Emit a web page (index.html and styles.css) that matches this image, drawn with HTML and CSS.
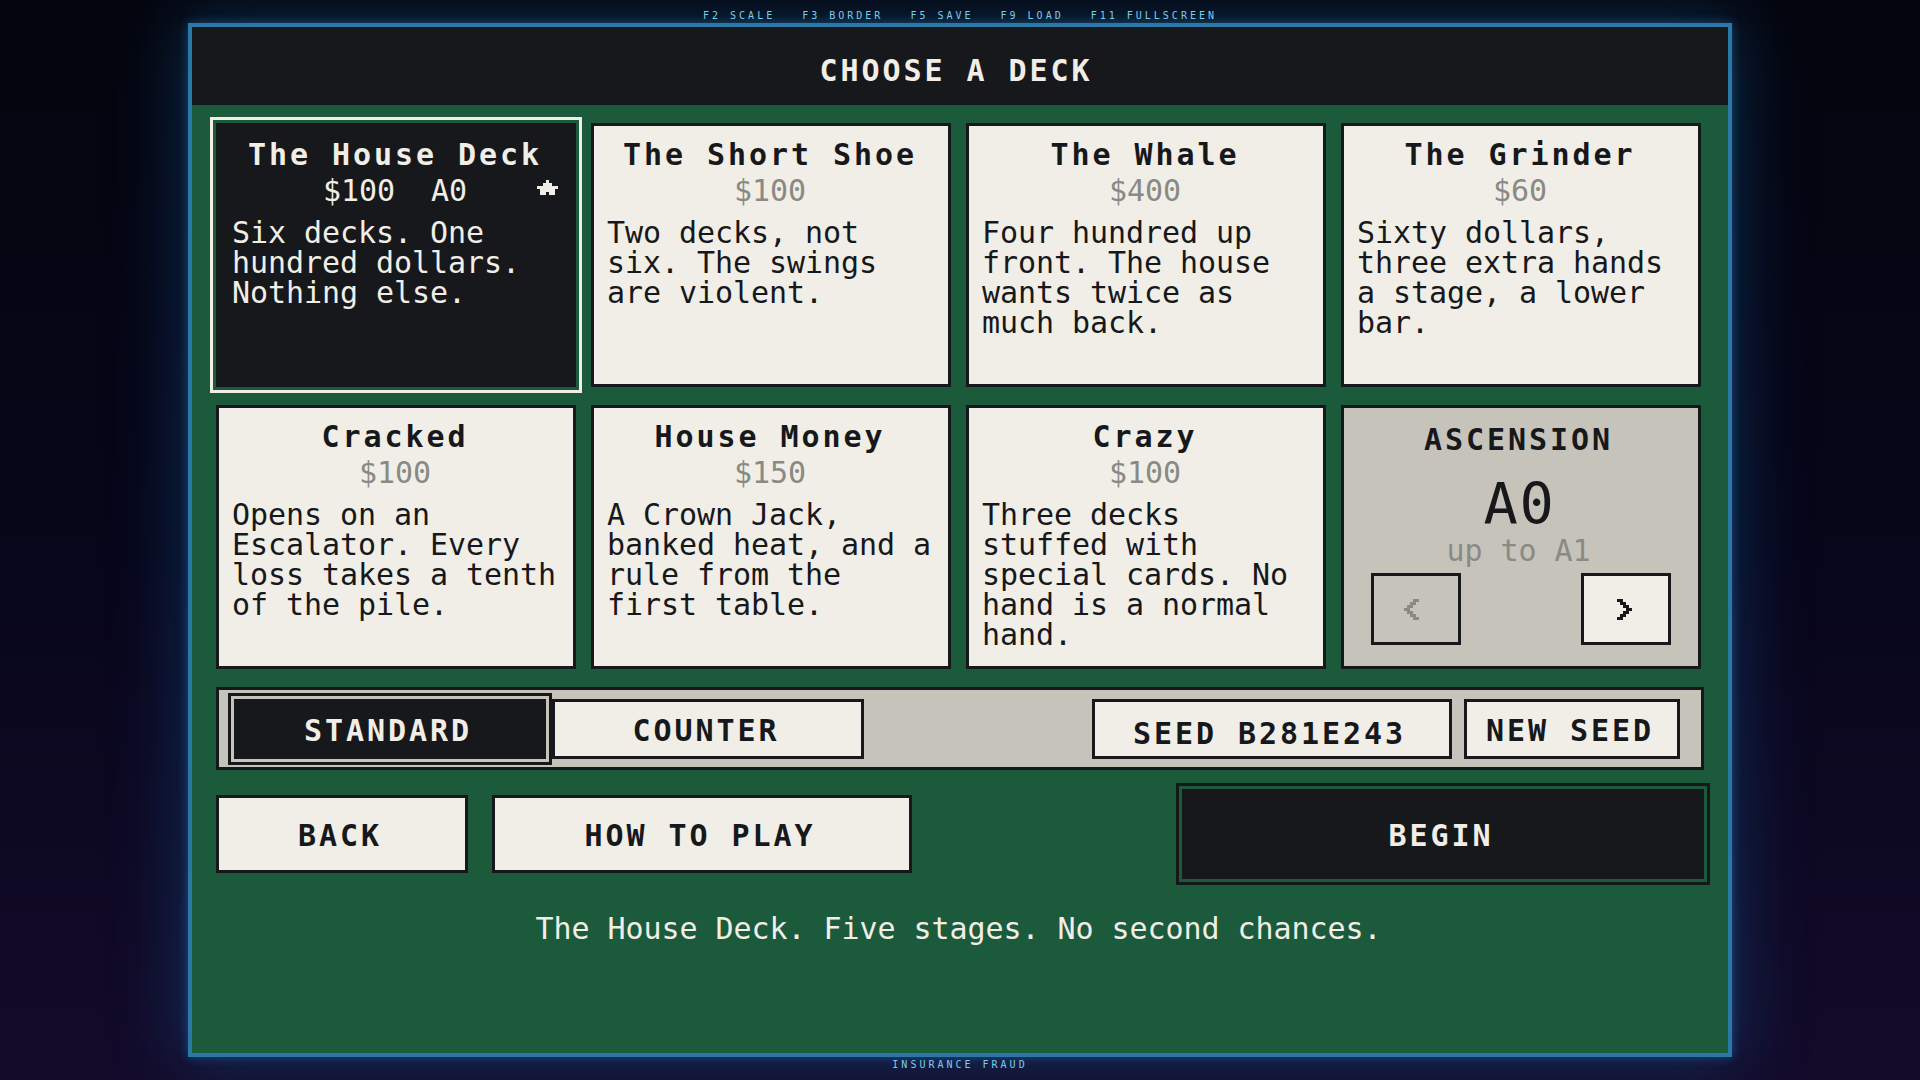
FILE: index.html
```html
<!DOCTYPE html>
<html lang="en">
<head>
<meta charset="utf-8">
<title>Insurance Fraud - Choose a Deck</title>
<link rel="stylesheet" href="styles.css">
</head>
<body>
<div class="hints">
  <span>F2 SCALE</span><span>F3 BORDER</span><span>F5 SAVE</span><span>F9 LOAD</span><span>F11 FULLSCREEN</span>
</div>
<main class="frame">
  <header class="head"><h1>CHOOSE A DECK</h1></header>
  <div class="content">
    <section class="grid">
      <article class="card selected">
        <h2>The House Deck</h2>
        <div class="price">$100  A0</div>
        <svg class="star" width="21" height="15" viewBox="0 0 7 5" shape-rendering="crispEdges"><path d="M3 0h1v1h1v1h2v1h-1v2h-2v-1h-1v1h-2v-2h-1v-1h2v-1h1z"/></svg>
        <p>Six decks. One hundred dollars. Nothing else.</p>
      </article>
      <article class="card">
        <h2>The Short Shoe</h2>
        <div class="price">$100</div>
        <p>Two decks, not six. The swings are violent.</p>
      </article>
      <article class="card">
        <h2>The Whale</h2>
        <div class="price">$400</div>
        <p>Four hundred up front. The house wants twice as much back.</p>
      </article>
      <article class="card">
        <h2>The Grinder</h2>
        <div class="price">$60</div>
        <p>Sixty dollars, three extra hands a stage, a lower bar.</p>
      </article>
      <article class="card">
        <h2>Cracked</h2>
        <div class="price">$100</div>
        <p>Opens on an Escalator. Every loss takes a tenth of the pile.</p>
      </article>
      <article class="card">
        <h2>House Money</h2>
        <div class="price">$150</div>
        <p>A Crown Jack, banked heat, and a rule from the first table.</p>
      </article>
      <article class="card">
        <h2>Crazy</h2>
        <div class="price">$100</div>
        <p>Three decks stuffed with special cards. No hand is a normal hand.</p>
      </article>
      <article class="card ascension">
        <h2>ASCENSION</h2>
        <div class="level">A0</div>
        <div class="upto">up to A1</div>
        <div class="arrows">
          <button class="arrow off"><svg width="15" height="21" viewBox="0 0 5 7" shape-rendering="crispEdges"><path d="M3 0h2v1h-1v1h-1v1h-1v1h1v1h1v1h1v1h-2v-1h-1v-1h-1v-1h-1v-1h1v-1h1v-1h1z"/></svg></button>
          <button class="arrow"><svg width="15" height="21" viewBox="0 0 5 7" shape-rendering="crispEdges"><path d="M0 0h2v1h1v1h1v1h1v1h-1v1h-1v1h-1v1h-2v-1h1v-1h1v-1h1v-1h-1v-1h-1v-1h-1z"/></svg></button>
        </div>
      </article>
    </section>
    <section class="bar">
      <button class="btn mode on">STANDARD</button>
      <button class="btn mode">COUNTER</button>
      <button class="btn seed">SEED B281E243</button>
      <button class="btn newseed">NEW SEED</button>
    </section>
    <section class="actions">
      <button class="btn back">BACK</button>
      <button class="btn how">HOW TO PLAY</button>
      <button class="btn begin">BEGIN</button>
    </section>
    <p class="status">The House Deck. Five stages. No second chances.</p>
  </div>
</main>
<div class="caption">INSURANCE FRAUD</div>
</body>
</html>
```
FILE: styles.css
```css
* { box-sizing: border-box; }
html, body { margin: 0; height: 100%; }
body {
  width: 1920px;
  height: 1080px;
  overflow: hidden;
  display: flex;
  flex-direction: column;
  align-items: center;
  font-family: "DejaVu Sans Mono", "Liberation Mono", monospace;
  font-size: 30px;
  line-height: 30px;
  letter-spacing: -0.06px;
  color: #17181b;
  background: linear-gradient(180deg, #04050d 0%, #07061a 50%, #130b2a 100%);
}
.hints {
  position: relative;
  z-index: 1;
  height: 23px;
  width: 100%;
  padding: 10px 0 0 0;
  display: flex;
  justify-content: center;
  gap: 27px;
  font-size: 10px;
  line-height: 11px;
  letter-spacing: 3px;
  color: #7fcbea;
}
.hints span { white-space: pre; }
.frame {
  width: 1544px;
  height: 1034px;
  flex: none;
  border: 4px solid #2b78a6;
  background: #1c5a3c;
  box-shadow: 0 0 10px rgba(40, 140, 210, .4), 0 0 64px 8px rgba(24, 100, 170, .36);
}
.head {
  height: 78px;
  background: #17181b;
  display: flex;
  justify-content: center;
  padding: 29px 8px 0 0;
}
h1 {
  margin: 0;
  font-size: 30px;
  line-height: 30px;
  letter-spacing: 2.94px;
  color: #f0eee6;
}
.content { padding: 18px 0 0 24px; }
.grid {
  width: 1485px;
  display: grid;
  grid-template-columns: repeat(4, 360px);
  grid-auto-rows: 264px;
  gap: 18px 15px;
}
.card {
  position: relative;
  border: 3px solid #17181b;
  background: #f0eee6;
  padding: 14px 10px 0 13px;
}
.card h2 {
  margin: 0;
  font-size: 30px;
  line-height: 30px;
  letter-spacing: 2.94px;
  text-align: center;
  padding-right: 5px;
}
.price {
  margin-top: 6px;
  text-align: center;
  color: #8a8a84;
  white-space: pre;
  padding-right: 5px;
}
.card p { margin: 12px 0 0; }
.selected {
  background: #17181b;
  color: #f0eee6;
  outline: 3px solid #f0eee6;
  outline-offset: 3px;
}
.selected .price { color: #f0eee6; }
.star {
  position: absolute;
  left: 318px;
  top: 54px;
  fill: #f0eee6;
}
.ascension {
  background: #c6c3bb;
  padding: 17px 27px 0 27px;
  text-align: center;
}
.ascension h2 { padding-right: 5px; }
.level {
  margin-top: 21px;
  font-size: 57px;
  line-height: 57px;
  letter-spacing: 1.7px;
  padding-right: 3px;
}
.upto {
  margin-top: 3px;
  color: #8a8a84;
  padding-right: 5px;
}
.arrows {
  margin-top: 7px;
  display: flex;
  justify-content: space-between;
}
.arrow {
  width: 90px;
  height: 72px;
  padding: 0 4px 0 0;
  border: 3px solid #17181b;
  background: #f0eee6;
  display: flex;
  align-items: center;
  justify-content: center;
  fill: #17181b;
}
.arrow.off {
  padding-right: 9px;
  background: transparent;
  fill: #8a8a84;
}
.btn {
  font: inherit;
  font-weight: bold;
  letter-spacing: 2.94px;
  color: #17181b;
  background: #f0eee6;
  border: 3px solid #17181b;
  padding: 4px 4px 0 0;
  height: 60px;
}
.bar {
  margin-top: 18px;
  width: 1488px;
  height: 83px;
  border: 3px solid #17181b;
  background: #c6c3bb;
  padding: 9px 21px 0 15px;
  display: flex;
  align-items: flex-start;
  gap: 6px;
}
.mode { width: 312px; }
.on {
  background: #17181b;
  color: #f0eee6;
  outline: 3px solid #17181b;
  outline-offset: 3px;
}
.seed {
  width: 360px;
  margin-left: auto;
  padding-top: 10px;
  padding-right: 5px;
}
.newseed {
  width: 216px;
  margin-left: 6px;
}
.actions {
  margin-top: 19px;
  width: 1488px;
  height: 90px;
  display: flex;
  align-items: center;
  gap: 24px;
}
.back { width: 252px; height: 78px; }
.how { width: 420px; height: 78px; }
.begin {
  width: 522px;
  height: 90px;
  margin-left: auto;
  background: #17181b;
  color: #f0eee6;
  outline: 3px solid #17181b;
  outline-offset: 3px;
}
.status {
  margin: 35px 0 0;
  width: 1488px;
  text-align: center;
  color: #f0eee6;
  padding-right: 3px;
}
.caption {
  position: relative;
  z-index: 1;
  height: 23px;
  width: 100%;
  padding: 2px 0 0 0;
  text-align: center;
  font-size: 10px;
  line-height: 11px;
  letter-spacing: 3px;
  color: #7fcbea;
}
```
